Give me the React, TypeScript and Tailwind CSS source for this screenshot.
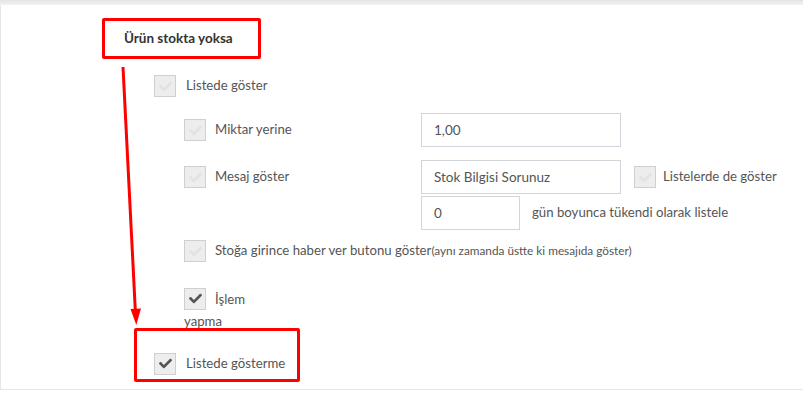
import React from "react";

const font = "font-['Lato','Noto_Sans',sans-serif]";

function Check({ checked }: { checked?: boolean }) {
    return (
        <span className="inline-flex w-[22px] h-[22px] shrink-0 items-center justify-center border border-[#cfcfcf] bg-[#ededed] align-middle">
            <svg width="13" height="13" viewBox="0 0 512 512" fill={checked ? "#555555" : "#e2e2e2"}>
                <path d="M173.898 439.404l-166.4-166.4c-9.997-9.997-9.997-26.206 0-36.204l36.203-36.204c9.997-9.998 26.207-9.998 36.204 0L192 312.69 432.095 72.596c9.997-9.997 26.207-9.997 36.204 0l36.203 36.204c9.997 9.997 9.997 26.206 0 36.204l-294.4 294.401c-9.998 9.997-26.207 9.997-36.204-.001z" />
            </svg>
        </span>
    );
}

function Field({ value, w }: { value: string; w: string }) {
    return (
        <div className={`${w} h-[34px] flex items-center border border-[#d4d4dc] bg-white pl-[12px] text-[13.5px] text-[#555]`}>
            {value}
        </div>
    );
}

export default function App() {
    return (
        <div className={`relative w-[803px] h-[395px] overflow-hidden bg-white ${font}`}>
            <div className="h-[5px] bg-gradient-to-b from-[#e4e4e4] to-[#f2f2f2]" />
            <div className="border-l border-b border-[#e6e6e6] pb-[14px]">
                <div className="pt-[23px] pl-[123px] leading-[20px] text-[13.5px] font-bold text-[#333]">Ürün stokta yoksa</div>

                <div className="mt-[27px] pl-[153px] flex items-center gap-[10px] text-[13.2px] text-[#555]">
                    <Check />
                    <span>Listede göster</span>
                </div>

                <div className="mt-[16px] pl-[183px] flex items-center text-[13.2px] text-[#555]">
                    <div className="w-[237px] flex items-center gap-[9px]">
                        <Check />
                        <span>Miktar yerine</span>
                    </div>
                    <Field value="1,00" w="w-[200px]" />
                </div>

                <div className="mt-[13px] pl-[183px] flex items-center text-[13.2px] text-[#555]">
                    <div className="w-[237px] flex items-center gap-[9px]">
                        <Check />
                        <span>Mesaj göster</span>
                    </div>
                    <Field value="Stok Bilgisi Sorunuz" w="w-[200px]" />
                    <div className="ml-[13px] flex items-center gap-[7px]">
                        <Check />
                        <span>Listelerde de göster</span>
                    </div>
                </div>

                <div className="mt-[2px] pl-[420px] flex items-center gap-[12px] text-[13.2px] text-[#555]">
                    <Field value="0" w="w-[99px]" />
                    <span>gün boyunca tükendi olarak listele</span>
                </div>

                <div className="mt-[10px] pl-[183px] flex items-center gap-[9px] text-[13.2px] text-[#555]">
                    <Check />
                    <span>
                        Stoğa girince haber ver butonu göster<span className="text-[11.8px]">(aynı zamanda üstte ki mesajıda göster)</span>
                    </span>
                </div>

                <div className="mt-[24px] ml-[183px] w-[72px] leading-[22px] text-[13.2px] text-[#555]">
                    <Check checked />
                    <span className="ml-[9px] align-middle">İşlem</span> yapma
                </div>

                <div className="mt-[21px] pl-[153px] flex items-center gap-[10px] text-[13.2px] text-[#555]">
                    <Check checked />
                    <span>Listede gösterme</span>
                </div>
            </div>

            {/* annotations */}
            <div className="absolute left-[102px] top-[18px] w-[159px] h-[41px] border-[3px] border-[#ff0000] rounded-[2px]" />
            <div className="absolute left-[134px] top-[328px] w-[166px] h-[54px] border-[3px] border-[#ff0000] rounded-[2px]" />
            <svg className="absolute left-0 top-0" width="803" height="395">
                <line x1="123" y1="67" x2="135.3" y2="310" stroke="#ff0000" strokeWidth="3" />
                <polygon points="130.5,309 141,308.5 136.3,325" fill="#ff0000" />
            </svg>
        </div>
    );
}
